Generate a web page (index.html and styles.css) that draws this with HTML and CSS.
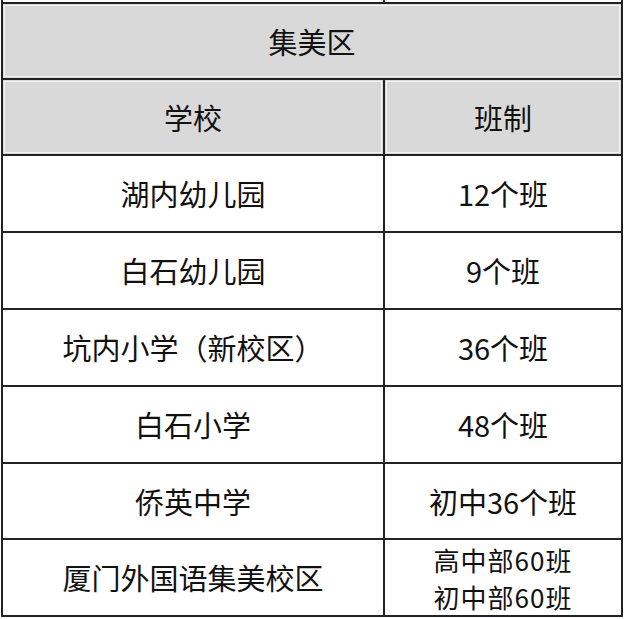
FILE: index.html
```html
<!DOCTYPE html>
<html lang="zh-CN">
<head>
<meta charset="utf-8">
<title>集美区</title>
<link rel="stylesheet" href="styles.css">
</head>
<body>
<div class="sheet">
  <div class="sliver">
    <div class="sliver-left"></div>
    <div class="sliver-right"></div>
  </div>
  <table class="grid">
    <colgroup>
      <col class="col-a">
      <col class="col-b">
    </colgroup>
    <tr class="r76">
      <td class="head" colspan="2">集美区</td>
    </tr>
    <tr class="r76">
      <td class="head">学校</td>
      <td class="head">班制</td>
    </tr>
    <tr class="r77">
      <td>湖内幼儿园</td>
      <td>12个班</td>
    </tr>
    <tr class="r77">
      <td>白石幼儿园</td>
      <td>9个班</td>
    </tr>
    <tr class="r77">
      <td>坑内小学（新校区）</td>
      <td>36个班</td>
    </tr>
    <tr class="r77">
      <td>白石小学</td>
      <td>48个班</td>
    </tr>
    <tr class="r76">
      <td>侨英中学</td>
      <td>初中36个班</td>
    </tr>
    <tr class="r77">
      <td>厦门外国语集美校区</td>
      <td class="two-line"><span class="line">高中部60班</span><span class="line">初中部60班</span></td>
    </tr>
  </table>
</div>
</body>
</html>
```

FILE: styles.css
```css
html, body {
  margin: 0;
  padding: 0;
  background: #ffffff;
}

.sheet {
  margin-left: 1px;
  width: 622px;
  font-family: "Noto Sans CJK SC", "Noto Sans", sans-serif;
  color: #111;
}

.sliver {
  display: flex;
  height: 2px;
}

.sliver-left {
  width: 380px;
  border-left: 2px solid #222;
  border-right: 2px solid #222;
}

.sliver-right {
  flex: 1;
  border-right: 2px solid #222;
}

.grid {
  border-collapse: separate;
  border-spacing: 0;
  width: 622px;
  table-layout: fixed;
  border-top: 2px solid #222;
  border-left: 2px solid #222;
}

.col-a {
  width: 382px;
}

.col-b {
  width: 238px;
}

.grid td {
  border-right: 2px solid #222;
  border-bottom: 2px solid #222;
  padding: 0;
  text-align: center;
  vertical-align: middle;
  font-size: 29px;
  line-height: 35px;
  font-weight: 400;
  white-space: nowrap;
}

.r76 td {
  height: 74px;
}

.r77 td {
  height: 75px;
}

.grid td.head {
  background: #d9d9d9;
  box-shadow: inset 0 0 0 1px #d9d9d9, inset 0 0 0 2px #f4f4f4;
}

.grid td.two-line {
  font-size: 26px;
  line-height: 37px;
  letter-spacing: 1px;
}

.line {
  display: block;
  height: 37px;
}
```
